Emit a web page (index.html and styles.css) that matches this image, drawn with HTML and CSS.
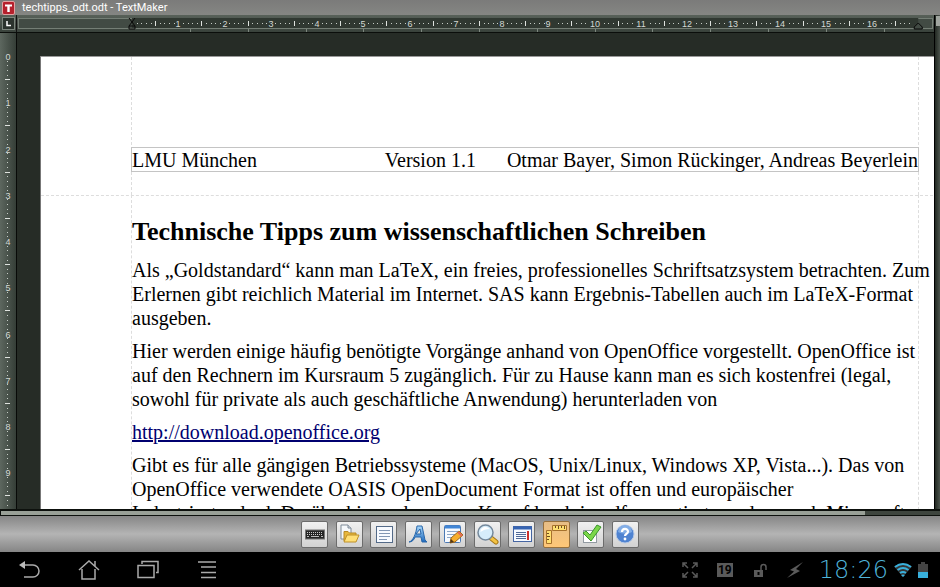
FILE: index.html
```html
<!DOCTYPE html>
<html lang="de">
<head>
<meta charset="utf-8">
<title>techtipps_odt.odt - TextMaker</title>
<link rel="stylesheet" href="styles.css">
<script src="rulers.js" defer></script>
</head>
<body>
<header class="titlebar">
  <svg class="app-logo" width="13" height="14" viewBox="0 0 13 14" aria-hidden="true"><rect x=".5" y=".5" width="12" height="13" rx="1.500" fill="#b5202c" stroke="#e3a0a0"/><path d="M3 3.500h7v2H7.700v5.500H5.300V5.500H3z" fill="#fff"/></svg>
  <h1 class="title">techtipps_odt.odt - TextMaker</h1>
</header>

<main class="workspace">
  <div class="editor">
    <div class="ruler-row">
      <button class="tab-kind" aria-label="Tabulator"><svg width="13" height="13" viewBox="0 0 13 13"><rect x=".5" y=".5" width="12" height="12" fill="#2b332d" stroke="#7b857c"/><path d="M5 4v4.500h4" fill="none" stroke="#fff" stroke-width="1.500"/></svg></button>
      <svg class="ruler-x" id="ruler-x" height="18" aria-label="Lineal"></svg>
    </div>
    <div class="view">
      <svg class="ruler-y" id="ruler-y" width="17" aria-label="Lineal vertikal"></svg>
      <div class="desk">
        <article class="page">
          <div class="page-head">
            <div class="head-box"><span class="head-left">LMU München</span><span>Version 1.1</span><span>Otmar Bayer, Simon Rückinger, Andreas Beyerlein</span></div>
          </div>
          <div class="page-body">
            <h2>Technische Tipps zum wissenschaftlichen Schreiben</h2>
            <p>Als „Goldstandard“ kann man LaTeX, ein freies, professionelles Schriftsatzsystem betrachten. Zum<br>Erlernen gibt reichlich Material im Internet. SAS kann Ergebnis-Tabellen auch im LaTeX-Format<br>ausgeben.</p>
            <p>Hier werden einige häufig benötigte Vorgänge anhand von OpenOffice vorgestellt. OpenOffice ist<br>auf den Rechnern im Kursraum 5 zugänglich. Für zu Hause kann man es sich kostenfrei (legal,<br>sowohl für private als auch geschäftliche Anwendung) herunterladen von</p>
            <p><a href="http://download.openoffice.org">http://download.openoffice.org</a></p>
            <p>Gibt es für alle gängigen Betriebssysteme (MacOS, Unix/Linux, Windows XP, Vista...). Das von<br>OpenOffice verwendete OASIS OpenDocument Format ist offen und europäischer<br>Industriestandard. Darüberhinaus kann per Knopfdruck in pdf exportiert werden, auch Microsoft</p>
          </div>
        </article>
      </div>
    </div>
  </div>
  <div class="scroll-y"><div class="thumb-y"></div></div>
</main>
<div class="scroll-x"><div class="thumb-x"></div></div>

<nav class="toolbar" aria-label="Werkzeuge">
  <div class="tools">
    <button class="tool" aria-label="Tastatur"><svg viewBox="0 0 24 24"><rect x="2.500" y="8" width="19" height="9" fill="#252525" stroke="#777"/><path d="M4 10.500h16M4 12.500h16" stroke="#ccc" stroke-dasharray="1 1"/><path d="M4 14.500h2m2 0h8m2 0h2" stroke="#bbb"/></svg></button>
    <button class="tool" aria-label="Öffnen"><svg viewBox="0 0 24 24"><path d="M4 3h7l3 3v11H4z" fill="#f5f8fb" stroke="#7e8b98"/><path d="M11 3v3h3" fill="#cfd8e0" stroke="#7e8b98"/><path d="M7 19V9.500h4l1.500 1.500H19v3" fill="#e7b73c" stroke="#b78925"/><path d="M7 20l3-7h12l-3 7z" fill="#ffdf76" stroke="#be9028"/></svg></button>
    <button class="tool" aria-label="Seite"><svg viewBox="0 0 24 24"><rect x="4.500" y="4.500" width="16" height="16" fill="#f7faff" stroke="#536a88"/><path d="M7 8.500h11M7 11.500h11M7 14.500h11M7 17.500h8" stroke="#8196b4"/></svg></button>
    <button class="tool" aria-label="Zeichen"><svg viewBox="0 0 24 24"><defs><linearGradient id="blue" x2="0" y2="1"><stop stop-color="#a9d8fa"/><stop offset="1" stop-color="#1c69bf"/></linearGradient></defs><path d="M3 20c4-1 7-8 8-16h5l3 14 2 2h-5l-1-5H9c-1 3-3 5-6 5zM10 12h5l-1-5z" fill="url(#blue)" fill-rule="evenodd" stroke="#2866a9"/></svg></button>
    <button class="tool" aria-label="Bearbeiten"><svg viewBox="0 0 24 24"><rect x="3.500" y="3.500" width="16" height="17" rx="1" fill="#f7faff" stroke="#4a79b5"/><path d="M4 5h15" stroke="#4186d6" stroke-width="3"/><path d="M6 9.500h11M6 12.500h8M6 15.500h5" stroke="#8da7c8"/><path d="M9 21l1-5 8-7 4 4-8 7z" fill="#f7ae2d" stroke="#9c671a"/><path d="M9 21l1-4 3 3z" fill="#513718"/><path d="M17 10l4 4" stroke="#e3685a" stroke-width="2"/></svg></button>
    <button class="tool" aria-label="Suchen"><svg viewBox="0 0 24 24"><path d="M16 16l5 4" stroke="#a57616" stroke-width="5" stroke-linecap="round"/><path d="M16 16l5 4" stroke="#f3c344" stroke-width="3" stroke-linecap="round"/><circle cx="10.500" cy="10.500" r="7.500" fill="#d6edfb" stroke="#75899c" stroke-width="1.500"/><path d="M5.500 10c0-3 2-5 5-5 2 0 3 1 4 2-4 0-6 1-9 3z" fill="#fff"/></svg></button>
    <button class="tool" aria-label="Formular"><svg viewBox="0 0 24 24"><rect x="3.500" y="4.500" width="18" height="15" fill="#f7faff" stroke="#4565a2"/><path d="M3 6h19" stroke="#3765b2" stroke-width="3"/><path d="M6 10.500h10M6 12.500h10M6 14.500h10M6 16.500h10" stroke="#506896"/><path d="M18 9v9" stroke="#cc302a" stroke-width="2"/></svg></button>
    <button class="tool tool-on" aria-label="Lineale" aria-pressed="true"><svg viewBox="0 0 24 24"><path d="M8.500 3.500h14v5h-14zM2.500 8.500h5v13h-5z" fill="#ffdf70" stroke="#a6712c"/><path d="M11.500 4v2m3-2v3m3-3v2m3-2v3M3 11.500h2m-2 3h3m-3 3h2" stroke="#6d4c20"/></svg></button>
    <button class="tool" aria-label="Rechtschreibung"><svg viewBox="0 0 24 24"><rect x="4.500" y="8.500" width="13" height="12" fill="#fff" stroke="#929aa2"/><path d="M4 11l3-2 4 4 7-10 4 2-10 14z" fill="#7bd64a" stroke="#39952b"/></svg></button>
    <button class="tool" aria-label="Hilfe"><svg viewBox="0 0 24 24"><circle cx="12" cy="12" r="9" fill="#4f83d1" stroke="#b5c8e5"/><path d="M5 10a7 7 0 0 1 14 0c-5 2-9 2-14 0z" fill="#83aee7"/><path d="M9 10c0-4 6-4 6-.500 0 2.500-3 2-3 4.500" fill="none" stroke="#fff" stroke-width="2.200"/><circle cx="12" cy="17" r="1.400" fill="#fff"/></svg></button>
  </div>
</nav>

<footer class="system">
  <div class="sys-keys">
    <button aria-label="Zurück"><svg width="22" height="20" viewBox="0 0 22 20"><path d="M6 5h8a6 6 0 0 1 0 12H5" fill="none" stroke="#aaa" stroke-width="1.500"/><path d="M0 5l6-4v8z" fill="#bbb"/></svg></button>
    <button aria-label="Startseite"><svg width="22" height="20" viewBox="0 0 22 20"><path d="M1 10L11 1l10 9M17 6V1M4 9v10h13V9" fill="none" stroke="#aaa" stroke-width="1.500"/></svg></button>
    <button aria-label="Letzte Apps"><svg width="22" height="20" viewBox="0 0 22 20"><path d="M1 5.500h16v12H1zM5 4V1.500h16v11h-2" fill="none" stroke="#aaa" stroke-width="1.500"/></svg></button>
    <button aria-label="Menü"><svg width="22" height="20" viewBox="0 0 22 20"><path d="M2 2h18M5 7h15M5 12.500h15M5 17.500h15" stroke="#aaa" stroke-width="1.500"/></svg></button>
  </div>
  <div class="status">
    <div class="notes">
      <svg width="16" height="16" viewBox="0 0 16 16" fill="none" stroke="#5a5a5a" stroke-width="1.500"><path d="M1 5V1h4M1 1l5 5M11 1h4v4M15 1l-5 5M1 11v4h4M1 15l5-5M15 11v4h-4M15 15l-5-5"/></svg>
      <span class="date">19</span>
      <svg width="16" height="16" viewBox="0 0 16 16"><path d="M2 8h9v7H2z" fill="#5a5a5a"/><path d="M9 8V5a2.500 2.500 0 0 1 5 0v3" fill="none" stroke="#5a5a5a" stroke-width="1.500"/><path d="M6.500 10v3" stroke="#000" stroke-width="2"/></svg>
      <svg width="16" height="16" viewBox="0 0 16 16"><path d="M16 0L3 8l4 1.500L0 16l13-7-4-2z" fill="#5a5a5a"/></svg>
    </div>
    <time class="clock">18:26</time>
    <svg width="18" height="16" viewBox="0 0 18 16" fill="none"><path d="M0 4.500Q9-2 18 4.500L9 15z" fill="#343434"/><path d="M1 5q8-6 16 0M3.500 8q5.500-4 11 0M6 11q3-2 6 0" stroke="#38b0dc" stroke-width="2"/><path d="M7 13q2-1 4 0l-2 2z" fill="#38b0dc"/></svg>
    <svg class="battery" width="10" height="16" viewBox="0 0 10 16"><path d="M3 0h4v2h3v9H0V2h3z" fill="#444"/><path d="M0 10h10v6H0z" fill="#38b0dc"/></svg>
  </div>
</footer>
</body>
</html>
```
FILE: styles.css
```css
* { box-sizing: border-box; }
html, body { height: 100%; margin: 0; }
body {
  display: flex;
  flex-direction: column;
  overflow: hidden;
  background: #000;
  font-family: Roboto, sans-serif;
}
button { padding: 0; border: 0; background: none; display: flex; align-items: center; justify-content: center; }
svg { display: block; flex: none; }

.titlebar { display: flex; align-items: center; gap: 7px; height: 15px; padding-left: 2px; background: linear-gradient(#7b7b7a, #858683); }
.title { margin: 0; color: #fff; font-size: 11px; line-height: 15px; font-weight: 400; }

.workspace { flex: 1; display: flex; min-height: 0; }
.editor { flex: 1; display: flex; flex-direction: column; min-width: 0; }
.ruler-row { display: flex; height: 18px; background: linear-gradient(#586159, #39423b); border-bottom: 1px solid #0b0e0b; }
.tab-kind { width: 17px; border-right: 1px solid #111; }
.ruler-x { flex: 1; min-width: 0; }
.view { flex: 1; display: flex; min-height: 0; }
.ruler-y { height: 100%; background: linear-gradient(90deg, #5d675f, #353e37); border-right: 1px solid #080a08; }
.ruler-x text, .ruler-y text { fill: #d4d9d4; font-family: "Liberation Sans", sans-serif; font-size: 9px; text-anchor: middle; }

.desk { flex: 1; min-width: 0; overflow: hidden; padding: 23px 0 0 23px; background: #262c26; }
.page { height: 100%; overflow: hidden; background: #fff; border-top: 1px solid #999; border-left: 1px solid #777; color: #000; font-family: "Liberation Serif", serif; font-size: 20px; line-height: 24px; white-space: nowrap; }
.page-head, .page-body { margin: 0 15px 0 90px; border: dashed #ddd; border-width: 0 1px; }
.page-head { height: 138px; padding-top: 90px; }
.head-box { display: flex; gap: 31px; height: 25px; margin: 0 -1px; border: 1px solid #c4c4c4; }
.head-left { margin-right: auto; }
.page-body { position: relative; min-height: 320px; }
.page-body::before { content: ""; position: absolute; top: 0; left: -91px; right: -15px; border-top: 1px dashed #ddd; }
h2 { margin: 0; padding-top: 22px; font-size: 26px; line-height: 30px; }
p { margin: 0 0 9px; }
h2 + p { padding-top: 11px; }
a { color: #000070; }

.scroll-y { width: 6px; background: linear-gradient(90deg, #222822, #4b534c); border-left: 1px solid #000; }
.thumb-y { height: 10px; margin: 1px 0 0 1px; background: #a0a59f; }
.scroll-x { height: 7px; border: solid #0d110d; border-width: 2px 0 1px 1px; background: #3f463f; }
.thumb-x { width: 92%; height: 4px; background: #99a097; }

.toolbar { display: flex; justify-content: center; align-items: center; height: 36px; background: linear-gradient(#868686, #b4b4b4 50%, #858585); }
.tools { display: flex; justify-content: space-between; width: 338px; }
.tool { width: 27px; height: 27px; border: 1px solid #6c6c6c; border-radius: 2px; background: linear-gradient(#f1f1f1, #d2d2d2); }
.tool svg { width: 24px; height: 24px; }
.tool-on { background: linear-gradient(#e6bd86, #ffc777); border-color: #96703d; }

.system { display: flex; justify-content: space-between; align-items: center; height: 35px; padding: 0 12px 0 19px; background: #000; }
.sys-keys { display: flex; gap: 37px; }
.status { display: flex; align-items: center; gap: 6px; }
.notes { display: flex; align-items: center; gap: 19px; margin-right: 10px; }
.date { width: 16px; height: 14px; background: #5a5a5a; color: #000; font-size: 12px; line-height: 14px; font-weight: 700; text-align: center; }
.clock { color: #4fb4da; font-family: "DejaVu Sans", sans-serif; font-weight: 200; font-size: 24px; line-height: 30px; }
```
FILE: rulers.js
```js
const NS = "http://www.w3.org/2000/svg";

function add(svg, tag, attrs, text) {
  const el = document.createElementNS(NS, tag);
  for (const key in attrs) el.setAttribute(key, attrs[key]);
  if (text !== undefined) el.textContent = text;
  svg.appendChild(el);
}

const CM = 46.25;

function drawHorizontal() {
  const svg = document.getElementById("ruler-x");
  const start = 115;
  const end = start + 17 * CM;
  const width = svg.clientWidth;
  add(svg, "rect", { x: 1.5, y: 3.5, width: width - 3, height: 10, fill: "#424b44", stroke: "#747e75" });
  add(svg, "rect", { x: start, y: 3, width: end - start, height: 10, fill: "#303831" });
  for (let mm = 1; mm < 170; mm++) {
    const x = Math.round(start + mm * CM / 10);
    if (mm % 10 === 0) add(svg, "text", { x: x, y: 12 }, mm / 10);
    else if (mm % 5 === 0) add(svg, "rect", { x: x, y: 6, width: 1, height: 5, fill: "#dfe3df" });
    else if (mm % 10 !== 1 && mm % 10 !== 9 || mm < 90) add(svg, "rect", { x: x, y: 8, width: 1, height: 1, fill: "#c6ccc6" });
  }
  for (let x = start + 58; x < end; x += 57.8) {
    add(svg, "rect", { x: Math.round(x), y: 14, width: 1, height: 3, fill: "#7d877e" });
  }
  add(svg, "path", { d: "M112 3l3 4 3-4M115 7l-3 4v3h6v-3l-3-4M112 11h6", fill: "none", stroke: "#080808" });
  add(svg, "path", { d: `M${end - 4} 14v-2l4-4 4 4v2z`, fill: "#424b44", stroke: "#080808" });
}

function drawVertical() {
  const svg = document.getElementById("ruler-y");
  for (let mm = 0; 23 + mm * CM / 10 < svg.clientHeight; mm++) {
    const y = Math.round(23 + mm * CM / 10);
    if (mm % 10 === 0) add(svg, "text", { x: 8, y: y + 4 }, mm / 10);
    else if (mm % 5 === 0) add(svg, "rect", { x: 5, y: y, width: 5, height: 1, fill: "#dfe3df" });
    else add(svg, "rect", { x: 7, y: y, width: 1, height: 1, fill: "#c6ccc6" });
  }
}

drawHorizontal();
drawVertical();
```
